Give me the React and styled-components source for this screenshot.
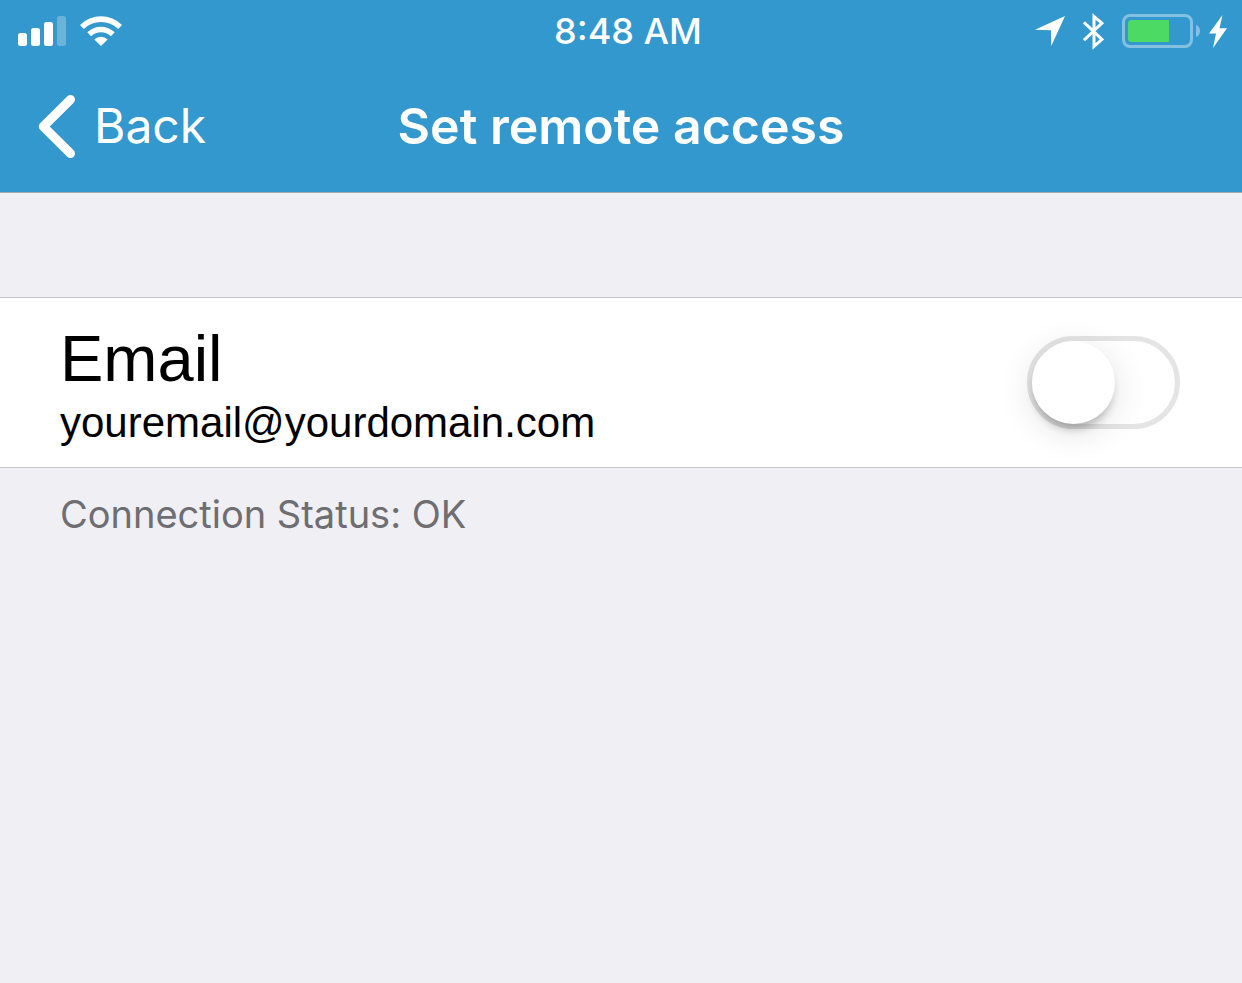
import React, { useState } from "react";
import styled, { createGlobalStyle } from "styled-components";

const GlobalStyle = createGlobalStyle`
  *, *::before, *::after { box-sizing: border-box; }
  body {
    margin: 0;
    background: #efeff4;
    font-family: Inter, "Liberation Sans", sans-serif;
  }
`;

const Screen = styled.div`
  min-height: 100vh;
  background: #efeff4;
`;

const TopBar = styled.header`
  background: #3398cd;
  color: #fff;
  border-bottom: 1px solid #a5a9b0;
`;

const StatusBar = styled.div`
  display: grid;
  grid-template-columns: 1fr auto 1fr;
  align-items: center;
  height: 60px;
  padding: 0 4px 0 18px;
`;

const StatusIcons = styled.div`
  display: flex;
  align-items: center;
  justify-content: ${(p) => (p.$end ? "flex-end" : "flex-start")};
  gap: ${(p) => (p.$end ? 18 : 14)}px;
  padding-right: ${(p) => (p.$end ? 11 : 0)}px;
`;

const PowerIcons = styled.div`
  display: flex;
  align-items: center;
  gap: 9px;
`;

const Icon = styled.svg`
  display: block;
  flex: none;
`;

const Time = styled.time`
  font-size: 36px;
  line-height: 62px;
  font-weight: 500;
`;

const NavBar = styled.nav`
  display: grid;
  grid-template-columns: 1fr auto 1fr;
  align-items: center;
  height: 132px;
  padding: 0 38px;
`;

const BackButton = styled.button`
  display: flex;
  align-items: center;
  justify-self: start;
  gap: 18px;
  padding: 0;
  border: 0;
  background: none;
  color: inherit;
  font: inherit;
  font-size: 48px;
  line-height: 64px;
  cursor: pointer;
`;

const Title = styled.h1`
  margin: 0;
  font-size: 50px;
  line-height: 64px;
  font-weight: 600;
`;

const Settings = styled.main`
  padding-top: 104px;
`;

const SettingRow = styled.div`
  display: flex;
  align-items: center;
  justify-content: space-between;
  padding: 0 62px 0 60px;
  background: #fff;
  border: solid #c8c7cc;
  border-width: 1px 0;
`;

const SettingLabel = styled.label`
  display: flex;
  flex-direction: column;
  padding: 24px 0 17px;
  color: #000;
  font-family: "Liberation Sans", Arial, sans-serif;
`;

const SettingName = styled.span`
  font-size: 65px;
  line-height: 74px;
`;

const SettingDetail = styled.span`
  font-size: 42px;
  line-height: 54px;
`;

const Switch = styled.input`
  appearance: none;
  flex: none;
  display: flex;
  width: 153px;
  height: 93px;
  margin: 0;
  border: 5px solid #e4e4e4;
  border-radius: 47px;
  background: #fff;
  cursor: pointer;

  &::before {
    content: "";
    width: 83px;
    height: 83px;
    border-radius: 50%;
    background: #fff;
    box-shadow: 0 8px 36px rgba(0, 0, 0, 0.12), 0 8px 9px -3px rgba(0, 0, 0, 0.24);
  }

  &:checked {
    justify-content: flex-end;
    border-color: #4cd964;
    background: #4cd964;
  }
`;

const Footnote = styled.p`
  margin: 0;
  padding: 22px 60px;
  color: #6d6d72;
  font-size: 38px;
  line-height: 48px;
`;

function SignalIcon() {
  return (
    <Icon width="48" height="30" viewBox="0 0 48 30" fill="#fff" aria-hidden="true">
      <rect x="0" y="17" width="9" height="13" rx="2.5" />
      <rect x="13" y="12" width="9" height="18" rx="2.5" />
      <rect x="26" y="6" width="9" height="24" rx="2.5" />
      <rect x="39" y="0" width="9" height="30" rx="2.5" opacity="0.27" />
    </Icon>
  );
}

function WifiIcon() {
  return (
    <Icon width="42" height="30" viewBox="0 0 42 30" fill="#fff" aria-hidden="true">
      <path d="M0 8.9 A30 30 0 0 1 42 8.9 L38.2 13 A24.6 24.6 0 0 0 3.8 13 Z" />
      <path d="M7.3 16.3 A19.6 19.6 0 0 1 34.7 16.3 L30.9 20.3 A14.4 14.4 0 0 0 11.1 20.3 Z" />
      <path d="M14.3 23.4 A9.8 9.8 0 0 1 27.7 23.4 L21 30 Z" />
    </Icon>
  );
}

function LocationIcon() {
  return (
    <Icon width="30" height="30" viewBox="0 0 30 30" fill="#fff" aria-hidden="true">
      <path d="M30 0 L16.3 30 L16 14.3 L0 13.7 Z" />
    </Icon>
  );
}

function BluetoothIcon() {
  return (
    <Icon width="21" height="37" viewBox="0 0 21 37" fill="none" stroke="#fff" strokeWidth="3" aria-hidden="true">
      <path d="M1 9.3 L19 26.3 L11 33.5 V3.5 L19 10.2 L1 27.2" />
    </Icon>
  );
}

function BatteryIcon() {
  return (
    <Icon width="78" height="34" viewBox="0 0 78 34" aria-hidden="true">
      <rect x="1.5" y="1.5" width="68" height="31" rx="6.5" fill="none" stroke="#fff" strokeOpacity="0.4" strokeWidth="3" />
      <path d="M74 11 A6.5 6.5 0 0 1 74 23 Z" fill="#fff" fillOpacity="0.4" />
      <path d="M9.5 6 H47 V28 H9.5 A3.5 3.5 0 0 1 6 24.5 V9.5 A3.5 3.5 0 0 1 9.5 6 Z" fill="#4cd964" />
    </Icon>
  );
}

function BoltIcon() {
  return (
    <Icon width="18" height="33" viewBox="0 0 18 33" fill="#fff" aria-hidden="true">
      <path d="M13.5 0 L0 18.5 H7 L4 33 L18 13.3 H10.5 Z" />
    </Icon>
  );
}

function ChevronIcon() {
  return (
    <Icon width="38" height="64" viewBox="0 0 38 64" fill="none" stroke="#fff" strokeWidth="9" strokeLinecap="round" strokeLinejoin="round" aria-hidden="true">
      <path d="M32.5 5.5 L5.3 32.5 L32.5 59.5" />
    </Icon>
  );
}

export default function App() {
  const [enabled, setEnabled] = useState(false);

  return (
    <Screen>
      <GlobalStyle />
      <TopBar>
        <StatusBar>
          <StatusIcons>
            <SignalIcon />
            <WifiIcon />
          </StatusIcons>
          <Time dateTime="08:48">8:48 AM</Time>
          <StatusIcons $end>
            <LocationIcon />
            <BluetoothIcon />
            <PowerIcons>
              <BatteryIcon />
              <BoltIcon />
            </PowerIcons>
          </StatusIcons>
        </StatusBar>
        <NavBar>
          <BackButton type="button">
            <ChevronIcon />
            Back
          </BackButton>
          <Title>Set remote access</Title>
        </NavBar>
      </TopBar>
      <Settings>
        <SettingRow>
          <SettingLabel htmlFor="email-access">
            <SettingName>Email</SettingName>
            <SettingDetail>youremail@yourdomain.com</SettingDetail>
          </SettingLabel>
          <Switch
            id="email-access"
            type="checkbox"
            role="switch"
            checked={enabled}
            onChange={(e) => setEnabled(e.target.checked)}
          />
        </SettingRow>
        <Footnote>Connection Status: OK</Footnote>
      </Settings>
    </Screen>
  );
}
